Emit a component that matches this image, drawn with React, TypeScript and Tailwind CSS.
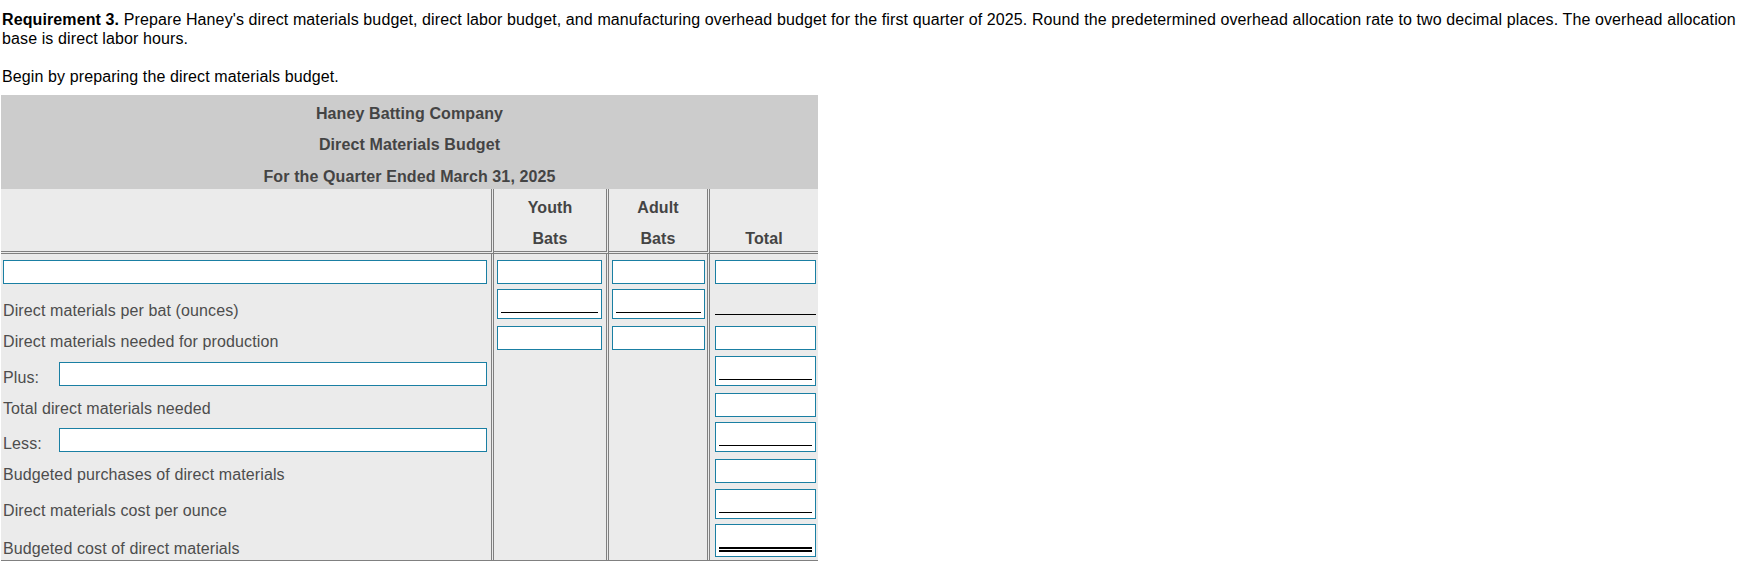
import React from "react";

const box = "border border-[#1a7fa3] bg-white w-full";

function Plain() {
  return <div className={`${box} h-[24px]`} />;
}
function Under() {
  return (
    <div className={`${box} h-[30px] flex items-end px-[3px] pb-[5px]`}>
      <div className="w-full border-b border-black" />
    </div>
  );
}
function DoubleUnder() {
  return (
    <div className={`${box} h-[33px] flex items-end px-[3px] pb-[4px]`}>
      <div className="w-full border-b-[5px] border-double border-black" />
    </div>
  );
}

function Row({
  h,
  label,
  youth,
  adult,
  total,
}: {
  h: string;
  label?: React.ReactNode;
  youth?: React.ReactNode;
  adult?: React.ReactNode;
  total?: React.ReactNode;
}) {
  return (
    <div className={`grid grid-cols-[493px_115px_101px_108px] ${h}`}>
      <div className="border-r-[3px] border-double border-[#808080] flex items-end pl-[2px] pr-[4px] pb-[3px] leading-[16px]">
        {label}
      </div>
      <div className="border-r-[3px] border-double border-[#808080] flex items-end pl-[3px] pr-[4px] pb-[3px]">
        {youth}
      </div>
      <div className="border-r-[3px] border-double border-[#808080] flex items-end pl-[3px] pr-[2px] pb-[3px]">
        {adult}
      </div>
      <div className="flex items-end pl-[5px] pr-[2px] pb-[3px]">{total}</div>
    </div>
  );
}

function Prefixed({ text }: { text: string }) {
  return (
    <div className="flex items-end w-full">
      <span className="w-[56px] shrink-0">{text}</span>
      <Plain />
    </div>
  );
}

export default function App() {
  return (
    <div className="font-['Liberation_Sans',Arial,sans-serif] text-[16px] tracking-[0.11px] bg-white w-[1746px] h-[575px] pl-px pt-[10px] text-black">
      <p className="leading-[19px] pl-px">
        <b>Requirement 3.</b> Prepare Haney's direct materials budget, direct labor budget, and manufacturing overhead
        budget for the first quarter of 2025. Round the predetermined overhead allocation rate to two decimal places. The
        overhead allocation base is direct labor hours.
      </p>
      <p className="leading-[19px] pl-px mt-[19px]">Begin by preparing the direct materials budget.</p>

      <div className="mt-[9px] w-[817px] leading-[18px]">
        <div className="bg-[#cccccc] text-[#444444] font-bold text-center">
          <div className="h-[31px] flex items-end justify-center pb-[3px]">Haney Batting Company</div>
          <div className="h-[31px] flex items-end justify-center pb-[3px]">Direct Materials Budget</div>
          <div className="h-[32px] flex items-end justify-center pb-[3px]">For the Quarter Ended March 31, 2025</div>
        </div>

        <div className="bg-[#ebebeb] text-[#4d4d4d]">
          <div className="grid grid-cols-[493px_115px_101px_108px] h-[31px] font-bold text-[#444444]">
            <div className="border-r-[3px] border-double border-[#808080]" />
            <div className="border-r-[3px] border-double border-[#808080] flex items-end justify-center pb-[3px]">
              Youth
            </div>
            <div className="border-r-[3px] border-double border-[#808080] flex items-end justify-center pb-[3px]">
              Adult
            </div>
            <div />
          </div>
          <div className="grid grid-cols-[493px_115px_101px_108px] h-[34px] font-bold text-[#444444]">
            <div className="border-r-[3px] border-b-[3px] border-double border-[#808080]" />
            <div className="border-r-[3px] border-b-[3px] border-double border-[#808080] flex items-end justify-center pb-[3px]">
              Bats
            </div>
            <div className="border-r-[3px] border-b-[3px] border-double border-[#808080] flex items-end justify-center pb-[3px]">
              Bats
            </div>
            <div className="border-b-[3px] border-double border-[#808080] flex items-end justify-center pb-[3px]">
              Total
            </div>
          </div>

          <Row h="h-[33px]" label={<Plain />} youth={<Plain />} adult={<Plain />} total={<Plain />} />
          <Row
            h="h-[35px]"
            label={<span>Direct materials per bat (ounces)</span>}
            youth={<Under />}
            adult={<Under />}
            total={<div className="w-full border-b border-black mb-[4px]" />}
          />
          <Row
            h="h-[31px]"
            label={<span>Direct materials needed for production</span>}
            youth={<Plain />}
            adult={<Plain />}
            total={<Plain />}
          />
          <Row h="h-[36px]" label={<Prefixed text="Plus:" />} total={<Under />} />
          <Row h="h-[31px]" label={<span>Total direct materials needed</span>} total={<Plain />} />
          <Row h="h-[35px]" label={<Prefixed text="Less:" />} total={<Under />} />
          <Row h="h-[31px]" label={<span>Budgeted purchases of direct materials</span>} total={<Plain />} />
          <Row h="h-[36px]" label={<span>Direct materials cost per ounce</span>} total={<Under />} />
          <Row h="h-[38px]" label={<span>Budgeted cost of direct materials</span>} total={<DoubleUnder />} />
        </div>
        <div className="h-px bg-[#808080]" />
      </div>
    </div>
  );
}
